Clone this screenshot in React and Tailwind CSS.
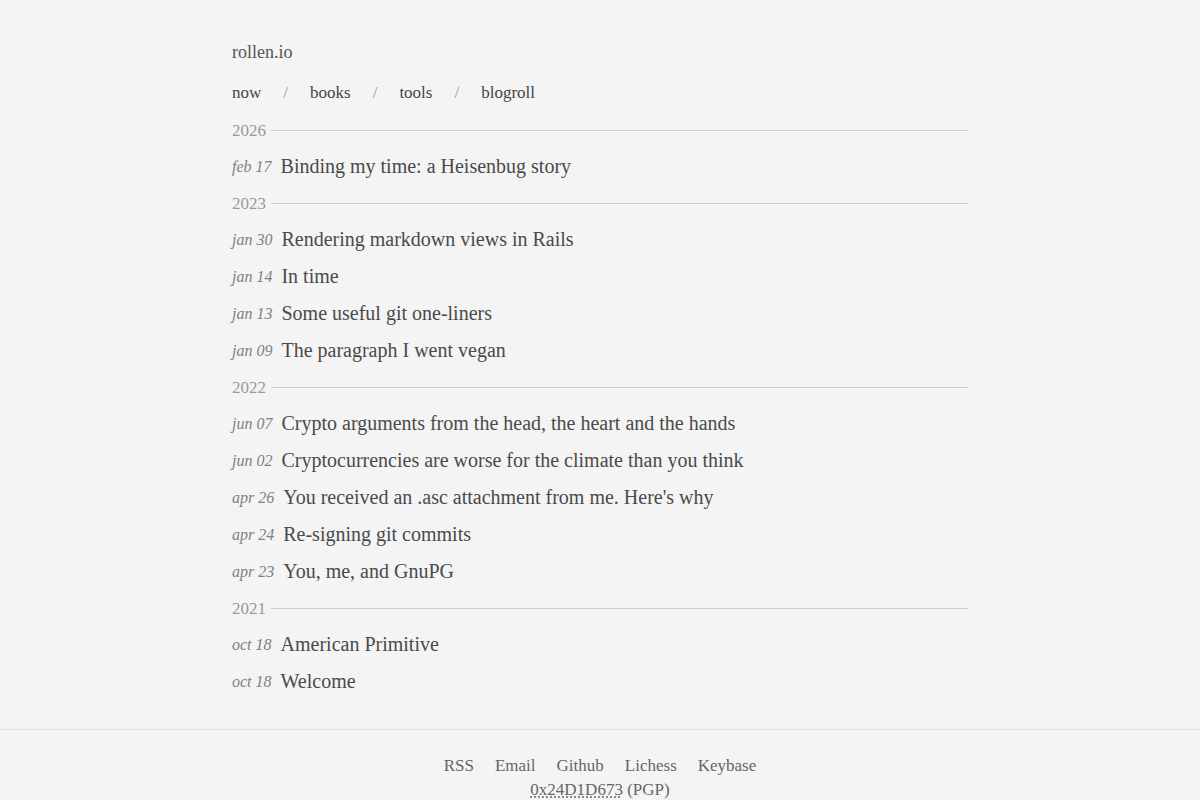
import React from "react";

const groups = [
  { year: "2026", posts: [["feb 17", "Binding my time: a Heisenbug story"]] },
  {
    year: "2023",
    posts: [
      ["jan 30", "Rendering markdown views in Rails"],
      ["jan 14", "In time"],
      ["jan 13", "Some useful git one-liners"],
      ["jan 09", "The paragraph I went vegan"],
    ],
  },
  {
    year: "2022",
    posts: [
      ["jun 07", "Crypto arguments from the head, the heart and the hands"],
      ["jun 02", "Cryptocurrencies are worse for the climate than you think"],
      ["apr 26", "You received an .asc attachment from me. Here's why"],
      ["apr 24", "Re-signing git commits"],
      ["apr 23", "You, me, and GnuPG"],
    ],
  },
  {
    year: "2021",
    posts: [
      ["oct 18", "American Primitive"],
      ["oct 18", "Welcome"],
    ],
  },
];

export default function App() {
  return (
    <div
      className="min-h-[800px] bg-[#f4f4f4] text-[#4a4a4a]"
      style={{ fontFamily: '"Liberation Serif", "DejaVu Serif", serif' }}
    >
      <main className="mx-auto w-[736px] pt-[40px]">
        <header className="text-[18px] leading-[24px] text-[#555]">rollen.io</header>
        <nav className="mt-[17px] flex items-center gap-[22px] text-[17px] leading-[24px] text-[#444]">
          <span>now</span>
          <span className="text-[#999]">/</span>
          <span>books</span>
          <span className="text-[#999]">/</span>
          <span>tools</span>
          <span className="text-[#999]">/</span>
          <span>blogroll</span>
        </nav>
        <div className="mt-[7px]">
          {groups.map((g) => (
            <section key={g.year}>
              <div className="flex h-[36px] items-center gap-[5px]">
                <span className="mt-[2px] text-[17px] leading-[24px] text-[#999]">{g.year}</span>
                <div className="mt-[1px] h-px flex-1 bg-[#cccccc]" />
              </div>
              {g.posts.map(([d, t], i) => (
                <div key={i} className="flex h-[37px] items-center gap-[9px]">
                  <span className="mt-[1px] text-[16px] italic leading-[24px] text-[#808080]">{d}</span>
                  <span className="mb-[2px] text-[20px] leading-[26px] text-[#4a4a4a]">{t}</span>
                </div>
              ))}
            </section>
          ))}
        </div>
      </main>
      <footer className="mt-[29px] border-t border-[#e2e2e2] pt-[24px] text-center text-[17px] leading-[24px] text-[#666]">
        <div className="flex justify-center gap-[21px]">
          <span>RSS</span>
          <span>Email</span>
          <span>Github</span>
          <span>Lichess</span>
          <span>Keybase</span>
        </div>
        <div>
          <span className="underline decoration-dotted decoration-[#777] underline-offset-2">0x24D1D673</span> (PGP)
        </div>
      </footer>
    </div>
  );
}
